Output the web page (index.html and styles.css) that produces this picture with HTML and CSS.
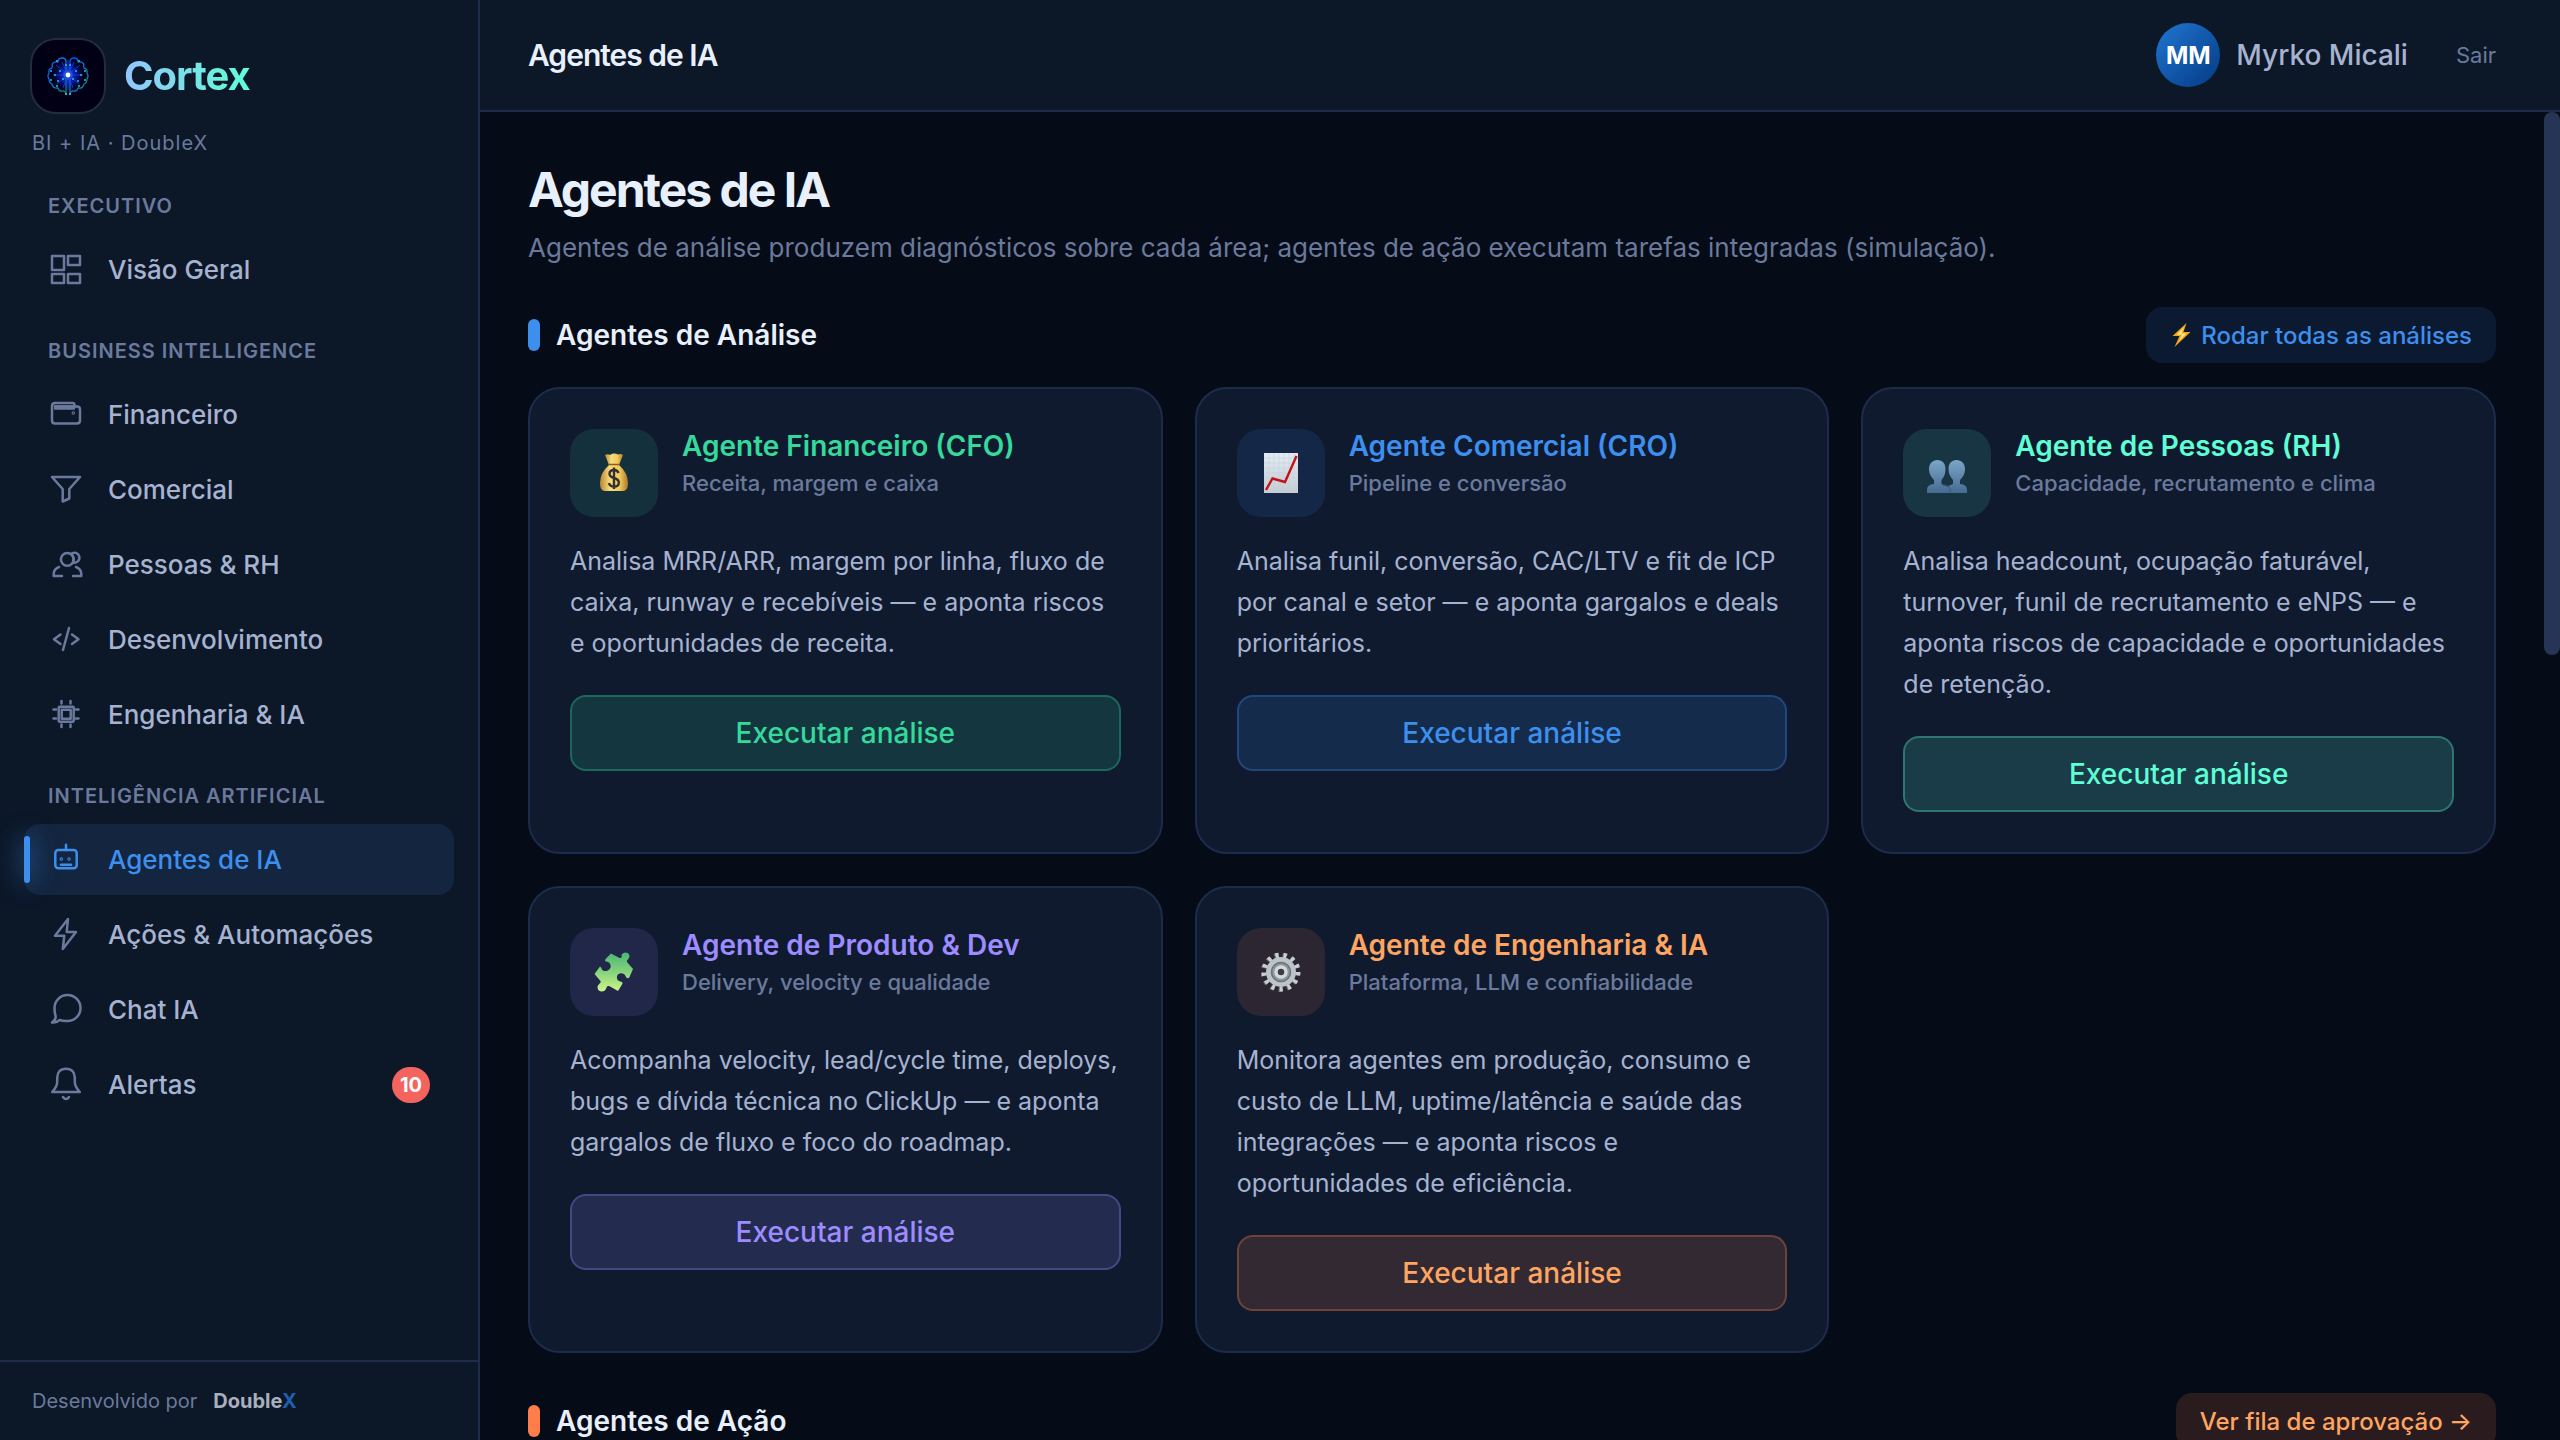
FILE: index.html
```html
<!DOCTYPE html>
<html lang="pt-BR">
<head>
<meta charset="utf-8">
<meta name="viewport" content="width=device-width, initial-scale=1">
<title>Cortex · Agentes de IA</title>
<link rel="stylesheet" href="styles.css">
</head>
<body>
<div class="app">
  <aside class="sidebar">
    <div class="brand">
      <span class="brand-mark">
        <svg viewBox="0 0 72 72" width="72" height="72" aria-hidden="true">
          <defs>
            <radialGradient id="glow"><stop offset="0" stop-color="#fff"/><stop offset=".12" stop-color="#6d9dff"/><stop offset=".35" stop-color="#0a2be8"/><stop offset="1" stop-color="#0416a0" stop-opacity="0"/></radialGradient>
            <linearGradient id="lobe" x1="0" y1="0" x2="1" y2="1"><stop offset="0" stop-color="#0a4cff"/><stop offset=".45" stop-color="#1173d8"/><stop offset="1" stop-color="#12806e"/></linearGradient>
          </defs>
          <circle cx="36" cy="35" r="16" fill="url(#glow)" opacity=".85"/>
          <g fill="none" stroke="url(#lobe)" stroke-width="1.3" stroke-linejoin="round">
            <path d="M34 54V22q0-4-4-4-4 0-4 4-5-1-6 3 1 1 0 3-4 1-3 5-2 3 0 6 0 4 3 5 1 5 6 4 1 4 6 3 2 1 2 4"/>
            <path d="M38 54V22q0-4 4-4 4 0 4 4 5-1 6 3-1 1 0 3 4 1 3 5 2 3 0 6 0 4-3 5-1 5-6 4-1 4-6 3-2 1-2 4"/>
          </g>
          <path d="M36 35 24 25M36 35 21 35M36 35 25 44M36 35 30 22M36 35 31 48M36 35 48 25M36 35 51 35M36 35 47 44M36 35 42 22M36 35 41 48M36 20V50" stroke="#1440e0" stroke-width=".8"/>
          <g fill="#2fb4f0"><circle cx="28" cy="31" r="1"/><circle cx="23" cy="35" r="1"/><circle cx="31" cy="39" r="1"/><circle cx="26" cy="41" r="1"/><circle cx="44" cy="31" r="1"/><circle cx="49" cy="35" r="1"/><circle cx="41" cy="39" r="1"/><circle cx="46" cy="41" r="1"/><circle cx="34" cy="25" r="1"/><circle cx="38" cy="25" r="1"/></g>
          <g fill="#19e5d0"><circle cx="34" cy="54" r="1"/><circle cx="38" cy="54" r="1"/><circle cx="25" cy="21" r=".9"/><circle cx="47" cy="21" r=".9"/><circle cx="19" cy="31" r=".9"/><circle cx="53" cy="31" r=".9"/><circle cx="19" cy="40" r=".9"/><circle cx="53" cy="40" r=".9"/><circle cx="25" cy="46" r=".9"/><circle cx="47" cy="46" r=".9"/></g>
          <circle cx="36" cy="35" r="2.4" fill="#fff"/>
        </svg>
      </span>
      <span class="brand-name">Cortex</span>
    </div>
    <p class="brand-tag">BI + IA · DoubleX</p>

    <nav class="nav" aria-label="Principal">
      <h2 class="nav-label">Executivo</h2>
      <a class="nav-item" href="#"><svg class="ico" viewBox="0 0 36 36"><path d="M4 4h12v14H4zM20 4h12v9H20zM4 22h12v9H4zM20 22h12v9H20z"/></svg>Visão Geral</a>

      <h2 class="nav-label">Business Intelligence</h2>
      <a class="nav-item" href="#"><svg class="ico" viewBox="0 0 36 36"><path d="M26.500 9.500V8q0-2-2-2H7Q4 6 4 9v14.500q0 3 3 3h22q3 0 3-3v-11q0-3-3-3H7"/><path d="M7 9.500h19.500M7 11.500h19" /><circle cx="25.300" cy="16" r=".5"/></svg>Financeiro</a>
      <a class="nav-item" href="#"><svg class="ico" viewBox="0 0 36 36"><path d="M4 5h28L21.300 17v9.500l-6.600 3V17z"/></svg>Comercial</a>
      <a class="nav-item" href="#"><svg class="ico" viewBox="0 0 36 36"><circle cx="19.300" cy="12.300" r="6.400"/><path d="M23 7a5 5 0 1 1 2 8.500M24.500 8.500q2 3.500.5 6.500M11 20q-5.300 2-5.300 7v2H14M28 20q5.300 2 5.300 7v2H25"/></svg>Pessoas &amp; RH</a>
      <a class="nav-item" href="#"><svg class="ico" viewBox="0 0 36 36"><path d="M12.500 12.500 6 17.200l6.500 4.800M24 12.500l6.500 4.700L24 22M21 6l-6 22"/></svg>Desenvolvimento</a>
      <a class="nav-item" href="#"><svg class="ico" viewBox="0 0 36 36"><rect x="10.700" y="9.700" width="15" height="15" rx="1"/><rect x="13.700" y="12.700" width="9" height="9"/><path d="M13.500 4v2.500M22.500 4v2.500M13.500 27.500V30M22.500 27.500V30M5.500 12.500H8M5.500 21.500H8M28 12.500h2.500M28 21.500h2.500"/></svg>Engenharia &amp; IA</a>

      <h2 class="nav-label">Inteligência Artificial</h2>
      <a class="nav-item is-active" href="#" aria-current="page"><svg class="ico" viewBox="0 0 36 36"><rect x="7.300" y="8" width="21.400" height="18.300" rx="3"/><path d="M18 2.800V8M13 22.700h10"/><circle cx="13.300" cy="17" r=".5"/><circle cx="21" cy="17" r=".5"/></svg>Agentes de IA</a>
      <a class="nav-item" href="#"><svg class="ico" viewBox="0 0 36 36"><path d="M20 2 7 18.700h9.300L14.800 32 28 15h-9.300z"/></svg>Ações &amp; Automações</a>
      <a class="nav-item" href="#"><svg class="ico" viewBox="0 0 36 36"><path d="M7.500 23.500q1 4-3.500 7 5 .3 7.500-2.500 3.500 1.200 7.700 1A13 13 0 1 0 6.500 16q0 5 1 7.500z"/></svg>Chat IA</a>
      <a class="nav-item" href="#"><svg class="ico" viewBox="0 0 36 36"><path d="M18 1.800c-5.500 0-8.800 3.500-8.800 9V15c0 4.500-2.200 6.500-5 10h27.600c-2.800-3.500-5-5.500-5-10v-4.200c0-5.500-3.300-9-8.800-9zM15 30q3 4 6 0"/></svg>Alertas<span class="badge">10</span></a>
    </nav>

    <footer class="side-foot">Desenvolvido por <strong class="maker">Double<span class="maker-x">X</span></strong></footer>
  </aside>

  <div class="page">
    <header class="topbar">
      <span class="topbar-title">Agentes de IA</span>
      <div class="user">
        <span class="avatar">MM</span>
        <span class="user-name">Myrko Micali</span>
        <a class="logout" href="#">Sair</a>
      </div>
    </header>

    <main class="content">
      <h1 class="title">Agentes de IA</h1>
      <p class="lead">Agentes de análise produzem diagnósticos sobre cada área; agentes de ação executam tarefas integradas (simulação).</p>

      <section class="section">
        <div class="section-head">
          <h2 class="section-title">Agentes de Análise</h2>
          <button class="pill tone-blue" type="button"><svg class="bolt" viewBox="0 0 18 24" aria-hidden="true"><path d="M14 0 0 13h7L2 24 18 9h-7z" fill="#f6a313"/><path d="M11.500 4 4 11.800h5.500L6.500 18 14 10.500H9z" fill="#ffe98a"/></svg>Rodar todas as análises</button>
        </div>

        <div class="grid">
          <article class="card tone-green">
            <div class="card-head">
              <span class="card-icon">
                <svg viewBox="0 0 40 40" aria-hidden="true">
                  <defs><linearGradient id="bag" x1="0" x2="1"><stop offset="0" stop-color="#b98530"/><stop offset=".35" stop-color="#f7dc7c"/><stop offset=".7" stop-color="#f0c95a"/><stop offset="1" stop-color="#b07a28"/></linearGradient></defs>
                  <path d="M11 2q3-1.500 5 0 4-2.500 8-.500 3-1 5 .5l-4 10H15z" fill="url(#bag)"/>
                  <path d="M15 12h10q9 8 9 18 0 8-5 8H11q-5 0-5-8 0-10 9-18z" fill="url(#bag)"/>
                  <path d="M14.500 11.500h11" stroke="#8a5d1e" stroke-width="1.500"/>
                  <path d="M24.500 20q-1-3-4.500-3-4.500 0-4.500 3.800 0 3 4.500 4.200 4.800 1.200 4.800 4.700 0 3.800-4.800 3.800-4.300 0-5-3.500M20 14.500v21.500" fill="none" stroke="#33302f" stroke-width="2.400"/>
                </svg>
              </span>
              <div><h3 class="card-title">Agente Financeiro (CFO)</h3><p class="card-sub">Receita, margem e caixa</p></div>
            </div>
            <p class="card-text">Analisa MRR/ARR, margem por linha, fluxo de caixa, runway e recebíveis — e aponta riscos e oportunidades de receita.</p>
            <button class="run" type="button">Executar análise</button>
          </article>

          <article class="card tone-blue">
            <div class="card-head">
              <span class="card-icon">
                <svg viewBox="0 0 40 40" aria-hidden="true">
                  <defs><linearGradient id="sheet" x1="0" y1="0" x2="0" y2="1"><stop offset="0" stop-color="#e2ebf3"/><stop offset="1" stop-color="#c6ccd2"/></linearGradient></defs>
                  <path d="M3 0h34v40H3z" fill="url(#sheet)"/>
                  <path d="M8 0v40M13 0v40M18 0v40M23 0v40M28 0v40M33 0v40M3 5h34M3 10h34M3 15h34M3 20h34M3 25h34M3 30h34M3 35h34" stroke="#c5d3df" stroke-width=".6"/>
                  <path d="M5 37l6.500-11.500L24 29 35.500 3" fill="none" stroke="#c4121a" stroke-width="2.400"/>
                </svg>
              </span>
              <div><h3 class="card-title">Agente Comercial (CRO)</h3><p class="card-sub">Pipeline e conversão</p></div>
            </div>
            <p class="card-text">Analisa funil, conversão, CAC/LTV e fit de ICP por canal e setor — e aponta gargalos e deals prioritários.</p>
            <button class="run" type="button">Executar análise</button>
          </article>

          <article class="card tone-mint">
            <div class="card-head">
              <span class="card-icon">
                <svg viewBox="0 0 40 40" aria-hidden="true">
                  <defs><linearGradient id="busts" x1="0" y1="0" x2="0" y2="1"><stop offset="0" stop-color="#7ba6c8"/><stop offset="1" stop-color="#466b91"/></linearGradient></defs>
                  <path d="M10.500 7c5 0 8 3.500 8 9 0 5-1.500 8-4 11v4l5.500 2.500L26 31v-4c-2.500-3-4.500-6-4.500-11 0-5.500 3-9 8-9s8.500 3.500 8.500 9c0 5-2 8-5 11v4q7 .5 7 5.500V40H0v-3.500Q0 31.500 7 31v-4c-3-3-5-6-5-11 0-5.500 3.500-9 8.500-9z" fill="url(#busts)"/>
                  <path d="M15 32q8-1 8.500 7" fill="none" stroke="#34567a" stroke-width="1"/>
                </svg>
              </span>
              <div><h3 class="card-title">Agente de Pessoas (RH)</h3><p class="card-sub">Capacidade, recrutamento e clima</p></div>
            </div>
            <p class="card-text">Analisa headcount, ocupação faturável, turnover, funil de recrutamento e eNPS — e aponta riscos de capacidade e oportunidades de retenção.</p>
            <button class="run" type="button">Executar análise</button>
          </article>

          <article class="card tone-purple">
            <div class="card-head">
              <span class="card-icon">
                <svg viewBox="0 0 40 40" aria-hidden="true">
                  <defs><linearGradient id="puzzle" x1="0" y1="0" x2="0" y2="1"><stop offset="0" stop-color="#4db573"/><stop offset=".45" stop-color="#7fd07c"/><stop offset="1" stop-color="#cdf58a"/></linearGradient></defs>
                  <path d="M17 1.500l8.500 4.500q3 .5 2-3C29-.500 35-.500 35.500 4c0 3-3.500 4-2.500 6l6 7-3.500 8c-1 2-3 1.500-4-1-1.500-4-8-3.500-8.500.5-.5 4 2 4.500 3.500 5 2 .5 2.500 1.500 1.500 3L24 39l-8-4.500c-3-1-3 0-4 2.500-2 4-8.500 3-8.500-1.500 0-3.500 4-4 3-6.500L.500 22 6 14.500c2 1 1 3 3.500 4.200 3 1.300 7-1 7.200-4.200 0-3-1.700-4.700-4.200-5-2-.3-1.500-1.500-.5-3z" fill="url(#puzzle)"/>
                </svg>
              </span>
              <div><h3 class="card-title">Agente de Produto &amp; Dev</h3><p class="card-sub">Delivery, velocity e qualidade</p></div>
            </div>
            <p class="card-text">Acompanha velocity, lead/cycle time, deploys, bugs e dívida técnica no ClickUp — e aponta gargalos de fluxo e foco do roadmap.</p>
            <button class="run" type="button">Executar análise</button>
          </article>

          <article class="card tone-orange">
            <div class="card-head">
              <span class="card-icon">
                <svg viewBox="0 0 40 40" aria-hidden="true">
                  <circle cx="19" cy="20.500" r="17" fill="none" stroke="#6c6a6b" stroke-width="5" stroke-dasharray="3.300 4.916"/>
                  <circle cx="20" cy="20" r="17" fill="none" stroke="#c6cdd3" stroke-width="5" stroke-dasharray="3.300 4.916"/>
                  <circle cx="20" cy="20" r="12.500" fill="#8c9499" stroke="#bcc4c9" stroke-width="5"/>
                  <circle cx="20" cy="20" r="9.500" fill="#8f989d" stroke="#68737a" stroke-width="1.500"/>
                  <circle cx="20" cy="20" r="5" fill="#3f3c40" stroke="#d3d9dd" stroke-width="3.500"/>
                </svg>
              </span>
              <div><h3 class="card-title">Agente de Engenharia &amp; IA</h3><p class="card-sub">Plataforma, LLM e confiabilidade</p></div>
            </div>
            <p class="card-text">Monitora agentes em produção, consumo e custo de LLM, uptime/latência e saúde das integrações — e aponta riscos e oportunidades de eficiência.</p>
            <button class="run" type="button">Executar análise</button>
          </article>
        </div>
      </section>

      <section class="section">
        <div class="section-head">
          <h2 class="section-title orange-bar">Agentes de Ação</h2>
          <a class="pill tone-orange" href="#">Ver fila de aprovação →</a>
        </div>
      </section>
    </main>
    <div class="scroll-thumb" aria-hidden="true"></div>
  </div>
</div>
</body>
</html>
```

FILE: styles.css
```css
:root {
  --panel: #0c1728;
  --bg: #050b17;
  --card: #0f1a2f;
  --line: #1d2c4a;
  --text: #e8f0fc;
  --soft: #a6b3d0;
  --muted: #6b7a9c;
  --blue: #3d8fee;
}

* { box-sizing: border-box; }

body,
h1, h2, h3, p { margin: 0; }

body {
  background: var(--bg);
  color: var(--text);
  font-family: Inter, "Liberation Sans", sans-serif;
  font-optical-sizing: none;
  font-size: 28px;
}

a { color: inherit; text-decoration: none; }
button { font: inherit; cursor: pointer; }

.app { display: flex; height: 100vh; overflow: hidden; }

/* Sidebar */
.sidebar {
  display: flex;
  flex-direction: column;
  flex: 0 0 480px;
  background: var(--panel);
  border-right: 2px solid var(--line);
}

.brand { display: flex; align-items: center; gap: 18px; padding: 38px 30px 0; }

.brand-mark {
  display: flex;
  border: 2px solid #242b3d;
  border-radius: 26px;
  background: #020014;
  overflow: hidden;
}

.brand-name {
  font-size: 40px;
  line-height: 48px;
  font-weight: 700;
  letter-spacing: -1px;
  background: linear-gradient(90deg, #93c5fd, #5effd5);
  -webkit-background-clip: text;
  background-clip: text;
  color: transparent;
}

.brand-tag {
  padding: 15px 32px 0;
  color: var(--muted);
  font-size: 20px;
  line-height: 28px;
  letter-spacing: 1px;
}

.nav { display: flex; flex-direction: column; gap: 4px; flex: 1; padding: 7px 24px 0; }

.nav-label {
  padding: 30px 24px 12px;
  color: var(--muted);
  font-size: 20px;
  line-height: 24px;
  font-weight: 600;
  letter-spacing: 1px;
  text-transform: uppercase;
}

.nav-item {
  position: relative;
  display: flex;
  align-items: center;
  gap: 24px;
  height: 71px;
  padding: 0 24px;
  border-radius: 16px;
  color: var(--soft);
  font-size: 26px;
  font-weight: 500;
}

.ico {
  flex: none;
  width: 36px;
  height: 36px;
  fill: none;
  stroke: var(--muted);
  stroke-width: 2.5;
  stroke-linecap: round;
  stroke-linejoin: round;
}

.is-active { background: #13253f; color: var(--blue); }
.is-active .ico { stroke: var(--blue); }
.is-active::before {
  content: "";
  position: absolute;
  left: 0;
  top: 12px;
  bottom: 12px;
  width: 6px;
  border-radius: 3px;
  background: var(--blue);
  box-shadow: 0 0 24px rgba(61, 143, 238, .9);
}

.badge {
  margin-left: auto;
  padding: 0 8px;
  border-radius: 18px;
  background: #f4645f;
  color: #fff;
  font-size: 20px;
  line-height: 36px;
  font-weight: 700;
}

.side-foot {
  display: flex;
  gap: 16px;
  padding: 27px 32px;
  border-top: 2px solid var(--line);
  color: var(--muted);
  font-size: 20px;
  line-height: 24px;
}
.maker { color: #a9b0bd; font-weight: 700; }
.maker-x { color: #1f5fae; }

/* Page */
.page { position: relative; display: flex; flex-direction: column; flex: 1; min-width: 0; }

.topbar {
  display: flex;
  align-items: center;
  justify-content: space-between;
  flex: 0 0 112px;
  padding: 0 64px 0 48px;
  background: var(--panel);
  border-bottom: 2px solid var(--line);
}
.topbar-title { font-size: 30px; font-weight: 600; letter-spacing: -1px; }

.user { display: flex; align-items: center; gap: 16px; }
.avatar {
  display: grid;
  place-items: center;
  width: 64px;
  height: 64px;
  border-radius: 50%;
  background: linear-gradient(135deg, #2176d2, #033a84);
  color: #fff;
  font-size: 24px;
  font-weight: 700;
}
.user-name { color: var(--soft); font-weight: 500; }
.logout { padding-left: 32px; color: var(--muted); font-size: 22px; }

.content { flex: 1; min-height: 0; padding: 48px 64px 0 48px; overflow: hidden; }

.title { font-size: 48px; line-height: 60px; font-weight: 700; letter-spacing: -2px; }
.lead { margin-top: 8px; color: var(--muted); font-size: 26px; line-height: 39px; }

.section { margin-top: 40px; }
.section-head {
  display: flex;
  align-items: center;
  justify-content: space-between;
  margin-bottom: 24px;
}
.section-title {
  display: flex;
  align-items: center;
  gap: 16px;
  font-size: 28px;
  line-height: 34px;
  font-weight: 600;
}
.section-title::before {
  content: "";
  width: 12px;
  height: 32px;
  border-radius: 6px;
  background: var(--blue);
}
.orange-bar::before { background: #ff7d4a; }

.pill {
  display: flex;
  align-items: center;
  gap: 8px;
  height: 56px;
  padding: 0 24px;
  border: 0;
  border-radius: 16px;
  background: rgb(var(--tone) / 12%);
  color: var(--tone-text);
  font-size: 24px;
  font-weight: 500;
}
.pill.tone-orange { background: rgb(var(--tone) / 15%); }
.bolt { width: 23px; height: 24px; }

.grid { display: grid; grid-template-columns: repeat(3, 1fr); gap: 32px; }

.card {
  padding: 40px;
  border: 2px solid var(--line);
  border-radius: 32px;
  background: var(--card);
}
.card-head { display: flex; gap: 24px; margin-bottom: 24px; }
.card-icon {
  display: grid;
  place-items: center;
  flex: none;
  width: 88px;
  height: 88px;
  border-radius: 24px;
  background: rgb(var(--tone) / 12%);
}
.card-icon svg { width: 40px; height: 40px; }
.card-title { color: var(--tone-text); font-size: 28px; line-height: 34px; font-weight: 600; }
.card-sub { margin-top: 6px; color: var(--muted); font-size: 22px; line-height: 28px; font-weight: 500; }
.card-text { color: var(--soft); font-size: 25px; line-height: 41px; }

.run {
  width: 100%;
  height: 76px;
  margin-top: 31px;
  border: 2px solid rgb(var(--tone) / 30%);
  border-radius: 16px;
  background: rgb(var(--tone) / 15%);
  color: var(--tone-text);
  font-size: 28px;
  font-weight: 500;
}

.tone-green { --tone: 52 217 155; --tone-text: #34d99b; }
.tone-blue { --tone: 61 143 238; --tone-text: #3d8fee; }
.tone-mint { --tone: 94 255 213; --tone-text: #5effd5; }
.tone-purple { --tone: 157 140 255; --tone-text: #9d8cff; }
.tone-orange { --tone: 255 125 74; --tone-text: #ffa562; }

.scroll-thumb {
  position: absolute;
  top: 112px;
  right: 0;
  width: 16px;
  height: 543px;
  border-radius: 8px;
  background: #263555;
}
```
